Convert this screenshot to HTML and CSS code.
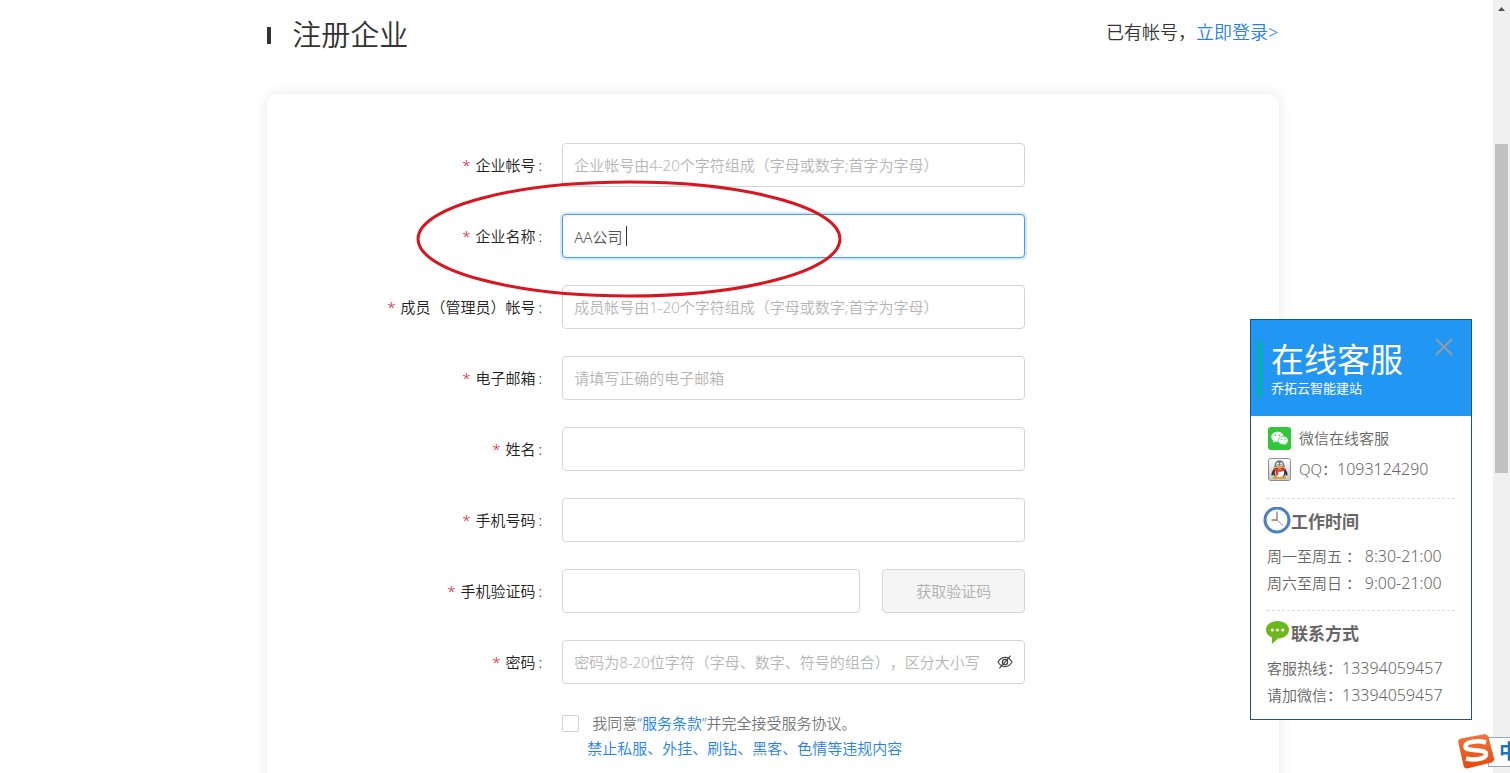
FILE: index.html
```html
<!DOCTYPE html>
<html lang="zh-CN">
<head>
    <meta charset="UTF-8">
    <meta name="viewport" content="width=device-width, initial-scale=1.0">
    <title>注册企业</title>
    <link rel="stylesheet" href="styles.css">
</head>
<body>
    <main class="page">
        <header class="page-header">
            <h1>注册企业</h1>
            <p>已有帐号，<a href="#">立即登录&gt;</a></p>
        </header>

        <form class="card">
            <div class="form-row">
                <label for="account">企业帐号</label>
                <div class="field">
                    <input type="text" id="account" placeholder="企业帐号由4-20个字符组成（字母或数字;首字为字母）">
                </div>
            </div>
            <div class="form-row">
                <label for="company">企业名称</label>
                <div class="field">
                    <input type="text" id="company" class="active" value="AA公司">
                    <span class="caret"></span>
                    <svg class="mark" viewBox="0 0 427 118">
                        <ellipse cx="213" cy="59" rx="211" ry="57" fill="none" stroke="#d9161f" stroke-width="3"/>
                    </svg>
                </div>
            </div>
            <div class="form-row">
                <label for="member">成员（管理员）帐号</label>
                <div class="field">
                    <input type="text" id="member" placeholder="成员帐号由1-20个字符组成（字母或数字;首字为字母）">
                </div>
            </div>
            <div class="form-row">
                <label for="email">电子邮箱</label>
                <div class="field">
                    <input type="email" id="email" placeholder="请填写正确的电子邮箱">
                </div>
            </div>
            <div class="form-row">
                <label for="name">姓名</label>
                <div class="field">
                    <input type="text" id="name">
                </div>
            </div>
            <div class="form-row">
                <label for="phone">手机号码</label>
                <div class="field">
                    <input type="tel" id="phone">
                </div>
            </div>
            <div class="form-row">
                <label for="code">手机验证码</label>
                <div class="field">
                    <input type="text" id="code">
                    <button type="button" class="btn-code" disabled>获取验证码</button>
                </div>
            </div>
            <div class="form-row">
                <label for="password">密码</label>
                <div class="field">
                    <input type="password" id="password" placeholder="密码为8-20位字符（字母、数字、符号的组合），区分大小写">
                    <button type="button" class="btn-eye" aria-label="显示密码">
                        <svg viewBox="0 0 16 16" fill="none" stroke="#444" stroke-width="1.2">
                            <path d="M1 8C3 4.7 5.3 3.4 8 3.4S13 4.7 15 8c-2 3.300-4.300 4.600-7 4.600S3 11.300 1 8z"/>
                            <circle cx="8" cy="8" r="2.600"/>
                            <path d="M13.600 1.600L2.400 14.400"/>
                        </svg>
                    </button>
                </div>
            </div>
            <div class="agreement">
                <input type="checkbox" id="agree">
                <div class="agreement-text">
                    <label for="agree">我同意<a href="#">“服务条款”</a>并完全接受服务协议。</label>
                    <a class="notice" href="#">禁止私服、外挂、刷钻、黑客、色情等违规内容</a>
                </div>
            </div>
        </form>
    </main>

    <!-- 在线客服 -->
    <aside class="service">
        <div class="service-header">
            <div class="service-title">
                <h2>在线客服</h2>
                <p>乔拓云智能建站</p>
            </div>
            <button type="button" class="btn-close" aria-label="关闭">
                <svg viewBox="0 0 18 18" stroke="#8d9daa" stroke-width="2.200"><path d="M1 1l16 16M17 1L1 17"/></svg>
            </button>
        </div>
        <div class="service-body">
            <section>
                <p class="contact">
                    <svg viewBox="0 0 23 23">
                        <rect width="23" height="23" rx="3" fill="#30c739"/>
                        <path d="M9.500 4.800c-3.500 0-6.200 2.200-6.200 5 0 1.600.9 3 2.300 3.900L5 15.700l2.300-1.200c.7.2 1.400.3 2.200.3 3.500 0 6.200-2.200 6.200-5s-2.700-5-6.200-5z" fill="#fff"/>
                        <path d="M15.200 9.300c-2.800 0-5 1.800-5 4.200s2.200 4.200 5 4.200c.6 0 1.200-.1 1.700-.3l2 1-.5-1.800c1.100-.8 1.800-1.900 1.800-3.100 0-2.400-2.200-4.200-5-4.200z" fill="#effbef" stroke="#30c739" stroke-width=".6"/>
                        <g fill="#30c739"><circle cx="7.300" cy="8.300" r=".8"/><circle cx="11.500" cy="8.300" r=".8"/><circle cx="13.600" cy="12.300" r=".6"/><circle cx="16.900" cy="12.300" r=".6"/></g>
                    </svg>
                    微信在线客服
                </p>
                <p class="contact">
                    <svg viewBox="0 0 23 23">
                        <defs>
                            <linearGradient id="tile" x2="0" y2="1"><stop offset="0" stop-color="#fff"/><stop offset="1" stop-color="#c3c5cc"/></linearGradient>
                        </defs>
                        <rect x=".5" y=".5" width="22" height="22" rx="2" fill="url(#tile)" stroke="#8b8d93"/>
                        <path d="M6.300 10.500C4.300 13 3 15.500 3.600 17.400c.8.6 1.800-.6 2.400-1.400zM16.700 10.500c2 2.500 3.300 5 2.700 6.900-.8.600-1.800-.6-2.400-1.400z" fill="#34343a"/>
                        <ellipse cx="11.500" cy="14.500" rx="6.200" ry="5.500" fill="#34343a"/>
                        <ellipse cx="11.500" cy="15" rx="4.700" ry="4.500" fill="#fff"/>
                        <ellipse cx="8" cy="19.700" rx="3.300" ry="1.300" fill="#f09a21"/>
                        <ellipse cx="15" cy="19.700" rx="3.300" ry="1.300" fill="#f09a21"/>
                        <path d="M6.300 9.500C6.300 5 8.300 2.300 11.500 2.300s5.200 2.700 5.200 7.200z" fill="#777a82"/>
                        <ellipse cx="9.700" cy="6.500" rx="1.300" ry="1.900" fill="#fff"/>
                        <ellipse cx="13.300" cy="6.500" rx="1.300" ry="1.900" fill="#fff"/>
                        <circle cx="10" cy="6.800" r=".6"/><circle cx="13" cy="6.800" r=".6"/>
                        <ellipse cx="11.500" cy="9.200" rx="3.300" ry="1.100" fill="#f6a623"/>
                        <path d="M5.800 9.700c3.800 2.200 7.600 2.200 11.400 0l.6 2.300c-2.600 1.500-5.200 1.900-7.500 1.700v3.500H7.600v-4.300l-2.400-1z" fill="#e23a2c"/>
                    </svg>
                    <span>QQ：<span class="num">1093124290</span></span>
                </p>
            </section>
            <section>
                <h3>
                    <svg viewBox="0 0 28 28" fill="none">
                        <circle cx="14" cy="13" r="12" fill="#fbfdff" stroke="#4c80bf" stroke-width="3"/>
                        <path d="M14 4.500V13H8.500" stroke="#8b7a74" stroke-width="1.300"/>
                        <path d="M14 13l6 5.500" stroke="#c48377"/>
                    </svg>
                    工作时间
                </h3>
                <p>周一至周五 ： <span class="num">8:30-21:00</span></p>
                <p>周六至周日 ： <span class="num">9:00-21:00</span></p>
            </section>
            <section>
                <h3>
                    <svg viewBox="0 0 28 28">
                        <path d="M14.500 2C8 2 3 5.700 3 10.700c0 3.600 2.400 6.300 6 7.700L8.800 25l6.300-5.600C21.300 19.200 26 15.600 26 10.700 26 5.700 21 2 14.500 2z" fill="#6cb71c"/>
                        <g fill="#fff"><circle cx="9.300" cy="11" r="1.600"/><circle cx="14.500" cy="11" r="1.600"/><circle cx="19.700" cy="11" r="1.600"/></g>
                    </svg>
                    联系方式
                </h3>
                <p>客服热线：<span class="num">13394059457</span></p>
                <p>请加微信：<span class="num">13394059457</span></p>
            </section>
        </div>
    </aside>

    <div class="scrollbar">
        <svg viewBox="0 0 17 17"><path d="M5 11l3.500-4 3.500 4z" fill="#505050"/></svg>
        <div class="thumb"></div>
    </div>

    <div class="ime">
        <svg viewBox="0 0 38 36">
            <defs>
                <linearGradient id="ime-bg" x2="0" y2="1"><stop offset="0" stop-color="#f0743f"/><stop offset="1" stop-color="#e8480c"/></linearGradient>
            </defs>
            <path d="M3 4.500L26 .3q3.500-.6 4.500 2.700L36 24q.8 3.500-2.500 4.600L10 34.300q-3.500.7-4.500-2.800L.3 8.500Q-.4 5.300 3 4.500z" fill="url(#ime-bg)"/>
            <path d="M28 8.500C20 6 7.500 7.500 7.500 12.500c0 6 20.500 1.500 20.500 7.500 0 5.500-13 6.500-20 4.500" fill="none" stroke="#fff" stroke-width="4.600"/>
        </svg>
        <span>中</span>
    </div>
</body>
</html>
```
FILE: styles.css
```css
* {
    box-sizing: border-box;
}

body {
    margin: 0;
    height: 100vh;
    overflow: hidden;
    background: #fff;
    color: #333;
    font-family: "Noto Sans", "Noto Sans CJK SC", sans-serif;
    font-size: 15px;
    font-weight: 350;
    line-height: 24px;
    text-spacing-trim: space-all;
}

h1, h2, h3, p {
    margin: 0;
    font-weight: inherit;
}

a {
    color: #2482e8;
    text-decoration: none;
}

input, button {
    font: inherit;
    color: inherit;
    text-spacing-trim: inherit;
}

svg {
    display: block;
}

.page {
    display: grid;
    grid-template-columns: 5fr 1012px 4fr;
    padding-right: 17px;
}

.page > * {
    grid-column: 2;
}

.page-header {
    display: flex;
    justify-content: space-between;
    align-items: center;
    height: 70px;
    margin-bottom: 24px;
}

.page-header h1 {
    display: flex;
    align-items: center;
    gap: 21px;
    font-size: 29px;
    line-height: 40px;
}

.page-header h1::before {
    content: "";
    width: 4px;
    height: 17px;
    background: #333;
}

.page-header p {
    padding: 0 1px 7px 0;
    font-size: 18px;
}

.card {
    padding: 49px 0;
    background: #fff;
    border-radius: 10px;
    box-shadow: 0 0 14px rgba(0, 0, 0, 0.1);
}

/* 表单 */
.form-row {
    display: flex;
    align-items: center;
    margin-bottom: 27px;
}

.form-row > label {
    width: 295px;
    padding-right: 20px;
    text-align: right;
    color: #222;
}

.form-row > label::before {
    content: "*";
    margin-right: 5px;
    color: #d9161f;
}

.form-row > label::after {
    content: ":";
    margin-left: 3px;
}

.field {
    position: relative;
    display: flex;
    gap: 22px;
    width: 463px;
}

.field input {
    flex: 1;
    min-width: 0;
    height: 44px;
    padding: 0 11px;
    background: #fff;
    border: 1px solid #d5d5d5;
    border-radius: 4px;
    outline: none;
    color: #555;
}

.field input::placeholder {
    color: #b5b5b5;
    opacity: 1;
}

.field input.active {
    border-color: #4a9be6;
    box-shadow: 0 0 0 2px rgba(24, 144, 255, 0.2);
}

.caret {
    position: absolute;
    top: 12px;
    left: 64px;
    width: 1px;
    height: 20px;
    background: #333;
}

.mark {
    position: absolute;
    top: -34px;
    left: -146px;
    width: 427px;
    height: 118px;
    pointer-events: none;
    z-index: 1;
}

.btn-code {
    width: 143px;
    background: #f5f5f5;
    border: 1px solid #d5d5d5;
    border-radius: 4px;
    color: #b0b0b0;
}

.btn-eye {
    position: absolute;
    top: 14px;
    right: 12px;
    width: 16px;
    height: 16px;
    padding: 0;
    background: none;
    border: 0;
}

.agreement {
    display: flex;
    align-items: flex-start;
    gap: 8px;
    padding-left: 295px;
    line-height: 25px;
}

.agreement input {
    appearance: none;
    width: 17px;
    height: 17px;
    margin: 4px 0 0;
    border: 1px solid #d0d0d0;
    border-radius: 2px;
}

.agreement label {
    display: block;
    padding-left: 5px;
    color: #777;
}

/* 在线客服 */
.service {
    position: fixed;
    top: 319px;
    right: 38px;
    width: 222px;
    background: #fff;
    border: 1px solid #1f5485;
    color: #666;
    z-index: 2;
}

.service-header {
    display: flex;
    justify-content: space-between;
    align-items: flex-start;
    height: 96px;
    padding: 18px 18px 0 6px;
    background: #2196f3;
    color: #fff;
}

.service-title {
    margin-top: 3px;
    padding-left: 9px;
    border-left: 5px solid #07aeb4;
}

.service-title h2 {
    font-size: 33px;
    line-height: 38px;
    font-weight: 400;
}

.service-title p {
    font-size: 13px;
    line-height: 18px;
    font-weight: 400;
}

.btn-close {
    width: 18px;
    height: 18px;
    padding: 0;
    background: none;
    border: 0;
}

.service-body {
    padding: 0 16px;
}

.service section {
    padding: 7px 0 13px;
    line-height: 27px;
}

.service section + section {
    border-top: 1px dashed #ddd;
}

.service section:last-child {
    padding-bottom: 10px;
}

.contact {
    display: flex;
    align-items: center;
    gap: 8px;
    height: 31px;
    padding-left: 1px;
}

.contact svg {
    width: 23px;
    height: 23px;
}

.num {
    font-size: 16px;
}

.service h3 {
    display: flex;
    align-items: center;
    height: 30px;
    margin: 0 0 7px -4px;
    font-size: 17px;
    font-weight: 700;
}

.service h3 svg {
    width: 28px;
    height: 28px;
}

.scrollbar {
    position: fixed;
    top: 0;
    right: 0;
    bottom: 0;
    width: 17px;
    background: #f0f0f0;
}

.scrollbar .thumb {
    height: 329px;
    margin: 127px 2px 0;
    background: #c1c1c1;
}

/* 输入法 */
.ime {
    position: fixed;
    right: 0;
    bottom: 3px;
    display: flex;
    align-items: center;
    width: 52px;
    height: 36px;
    overflow: hidden;
    z-index: 3;
}

.ime svg {
    position: relative;
    flex: none;
    width: 38px;
    height: 36px;
    z-index: 1;
}

.ime span {
    flex: none;
    width: 40px;
    margin-left: -8px;
    padding-left: 10px;
    background: #fff;
    border: 1px solid #93a9bd;
    color: #1d74c0;
    font-size: 20px;
    font-weight: 700;
    line-height: 28px;
}
```
